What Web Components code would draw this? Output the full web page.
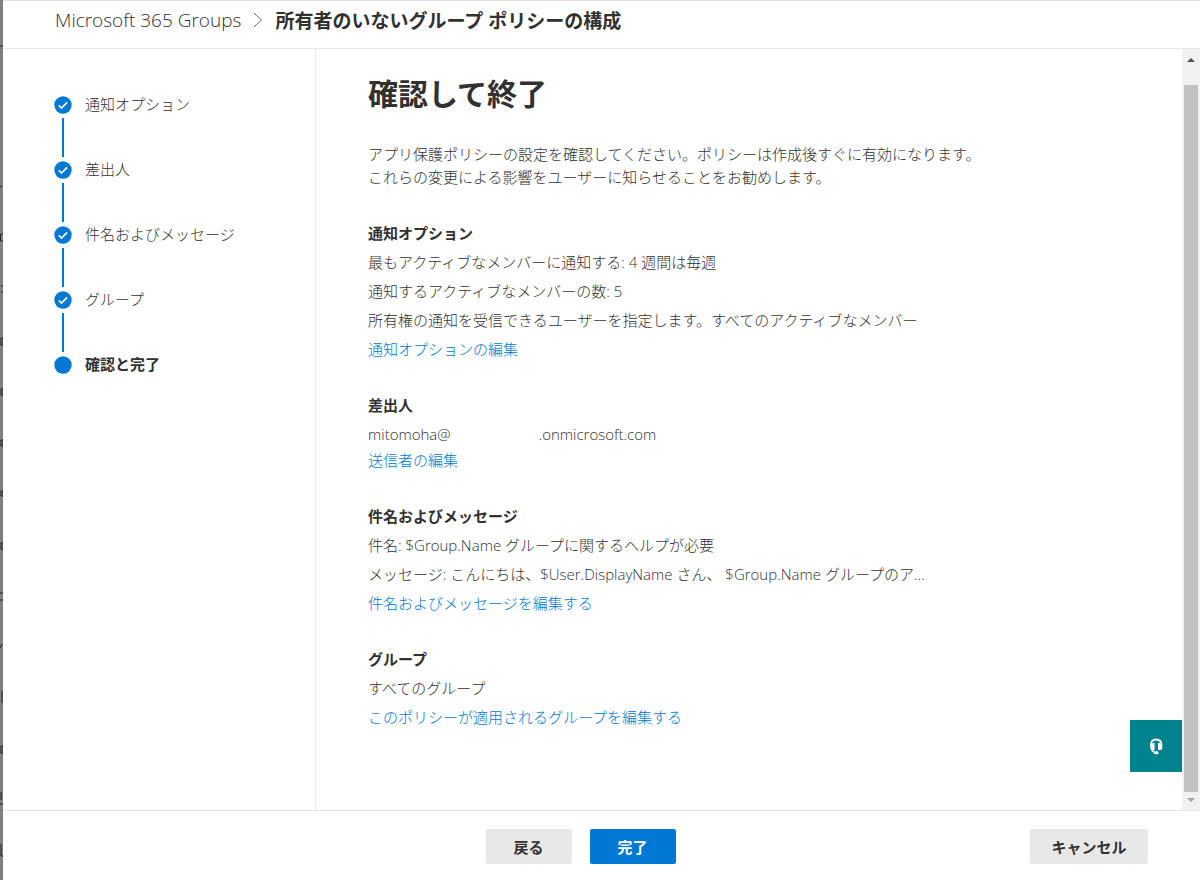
<!DOCTYPE html>
<html lang="ja">
<head>
<meta charset="utf-8">
<meta name="viewport" content="width=device-width, initial-scale=1">
<title>所有者のいないグループ ポリシーの構成</title>
<style>
  body {
    margin: 0;
    font-family: "Open Sans", "Noto Sans CJK JP", sans-serif;
    font-size: 15px;
    font-weight: 300;
    color: #323130;
    background: #fff;
  }
</style>
</head>
<body>
<policy-wizard>
  <wizard-header slot="header" parent="Microsoft 365 Groups" current="所有者のいないグループ ポリシーの構成"></wizard-header>
  <step-list slot="steps">
    <step-item state="done">通知オプション</step-item>
    <step-item state="done">差出人</step-item>
    <step-item state="done">件名およびメッセージ</step-item>
    <step-item state="done">グループ</step-item>
    <step-item state="current">確認と完了</step-item>
  </step-list>
  <review-page heading="確認して終了">
    <p slot="intro">アプリ保護ポリシーの設定を確認してください。ポリシーは作成後すぐに有効になります。<br>これらの変更による影響をユーザーに知らせることをお勧めします。</p>
    <review-section heading="通知オプション" edit="通知オプションの編集">
      <review-line>最もアクティブなメンバーに通知する: 4 週間は毎週</review-line>
      <review-line>通知するアクティブなメンバーの数: 5</review-line>
      <review-line>所有権の通知を受信できるユーザーを指定します。すべてのアクティブなメンバー</review-line>
    </review-section>
    <review-section heading="差出人" edit="送信者の編集">
      <review-line compact><span>mitomoha@</span><span>.onmicrosoft.com</span></review-line>
    </review-section>
    <review-section heading="件名およびメッセージ" edit="件名およびメッセージを編集する">
      <review-line>件名: $Group.Name グループに関するヘルプが必要</review-line>
      <review-line>メッセージ: こんにちは、$User.DisplayName さん、 $Group.Name グループのア...</review-line>
    </review-section>
    <review-section heading="グループ" edit="このポリシーが適用されるグループを編集する">
      <review-line>すべてのグループ</review-line>
    </review-section>
  </review-page>
  <help-button slot="help"></help-button>
  <scroll-track slot="scroll"></scroll-track>
  <wizard-footer slot="footer"></wizard-footer>
</policy-wizard>

<script>
// Page frame: dimmed page edge, header, steps, content, footer
class PolicyWizard extends HTMLElement {
  constructor() {
    super();
    this.attachShadow({ mode: 'open' });
    this.shadowRoot.innerHTML = `
      <style>
        :host {
          display: grid;
          grid-template-columns: 3px minmax(0, 1fr);
          min-height: 100vh;
        }
        .edge {
          background: #7f7f7f;
          overflow: hidden;
        }
        .edge svg {
          display: block;
        }
        .panel {
          display: flex;
          flex-direction: column;
          border-top: 1px solid #e1e1e1;
        }
        .body {
          flex: 1;
          display: grid;
          grid-template-columns: 313px minmax(0, 1fr) 18px;
        }
        nav {
          border-right: 1px solid #e8e8e8;
        }
        main {
          position: relative;
        }
        .help {
          position: absolute;
          right: 0;
          bottom: 38px;
        }
        .scroll {
          display: grid;
        }
      </style>
      <div class="edge">
        <svg width="3" height="880" viewBox="0 0 3 880" aria-hidden="true">
          <path d="M0 46h3M0 187l2-1M1 234h2M1 241h2M0.500 234v7M1 286h2M1 292h2M1 338h2v7h-2zM1 389h2v6h-2zM1 440h2v6h-2zM1 491h2v5h-2zM1 543h2v6h-2zM0 593h3M0 600h3M0 648l2-4M2 691v12M1 746h2v7h-2zM1 792v8M0 804h3M1 844v12h2" fill="none" stroke="#222"/>
        </svg>
      </div>
      <div class="panel">
        <slot name="header"></slot>
        <div class="body">
          <nav><slot name="steps"></slot></nav>
          <main>
            <slot></slot>
            <div class="help"><slot name="help"></slot></div>
          </main>
          <div class="scroll"><slot name="scroll"></slot></div>
        </div>
        <slot name="footer"></slot>
      </div>
    `;
  }
}

customElements.define('policy-wizard', PolicyWizard);

class WizardHeader extends HTMLElement {
  constructor() {
    super();
    this.attachShadow({ mode: 'open' });
    this.shadowRoot.innerHTML = `
      <style>
        :host {
          display: block;
          border-bottom: 1px solid #e8e8e8;
        }
        header {
          display: flex;
          align-items: center;
          height: 37px;
          padding: 0 52px 10px;
          gap: 12px;
          font-size: 19px;
        }
        a {
          color: #323130;
          text-decoration: none;
        }
        h2 {
          margin: 0;
          font-size: 19px;
          font-weight: 700;
        }
        svg {
          flex: none;
        }
      </style>
      <header>
        <a href="#groups"></a>
        <svg width="10" height="16" viewBox="0 0 10 16" aria-hidden="true">
          <path d="M1 1l7.500 7L1 15" fill="none" stroke="#666"/>
        </svg>
        <h2></h2>
      </header>
    `;
  }

  connectedCallback() {
    this.shadowRoot.querySelector('a').textContent = this.getAttribute('parent');
    this.shadowRoot.querySelector('h2').textContent = this.getAttribute('current');
  }
}

customElements.define('wizard-header', WizardHeader);

class StepList extends HTMLElement {
  constructor() {
    super();
    this.attachShadow({ mode: 'open' });
    this.shadowRoot.innerHTML = `
      <style>
        :host {
          display: flex;
          flex-direction: column;
          padding: 44px 20px 20px 51px;
        }
      </style>
      <slot></slot>
    `;
  }
}

customElements.define('step-list', StepList);

class StepItem extends HTMLElement {
  constructor() {
    super();
    this.attachShadow({ mode: 'open' });
    this.shadowRoot.innerHTML = `
      <style>
        :host {
          display: grid;
          grid-template-columns: 18px 1fr;
          column-gap: 13px;
          height: 65px;
        }
        .marker {
          display: flex;
          flex-direction: column;
          align-items: center;
          gap: 4px;
          padding-top: 3px;
        }
        .marker svg {
          flex: none;
        }
        .line {
          width: 2px;
          height: 39px;
          background: #0078d4;
        }
        .label {
          line-height: 22px;
        }
        :host([state="current"]) .line,
        :host([state="current"]) .check {
          display: none;
        }
        :host([state="current"]) .label {
          font-weight: 700;
        }
      </style>
      <div class="marker">
        <svg width="18" height="18" viewBox="0 0 18 18" aria-hidden="true">
          <circle cx="9" cy="9" r="8.700" fill="#0078d4"/>
          <path class="check" d="M4.800 9.400l2.700 2.700 5.600-5.700" fill="none" stroke="#fff" stroke-width="1.600"/>
        </svg>
        <div class="line"></div>
      </div>
      <div class="label"><slot></slot></div>
    `;
  }
}

customElements.define('step-item', StepItem);

class ReviewPage extends HTMLElement {
  constructor() {
    super();
    this.attachShadow({ mode: 'open' });
    this.shadowRoot.innerHTML = `
      <style>
        :host {
          display: block;
          padding: 23px 52px 40px;
        }
        h1 {
          margin: 0 0 27px;
          font-size: 30px;
          line-height: 44px;
        }
        ::slotted(p) {
          margin: 0;
          line-height: 23px;
        }
        .sections {
          display: flex;
          flex-direction: column;
          gap: 27px;
          margin-top: 30px;
        }
      </style>
      <h1></h1>
      <slot name="intro"></slot>
      <div class="sections"><slot></slot></div>
    `;
  }

  connectedCallback() {
    this.shadowRoot.querySelector('h1').textContent = this.getAttribute('heading');
  }
}

customElements.define('review-page', ReviewPage);

class ReviewSection extends HTMLElement {
  constructor() {
    super();
    this.attachShadow({ mode: 'open' });
    this.shadowRoot.innerHTML = `
      <style>
        :host {
          display: block;
          line-height: 29px;
        }
        h3 {
          margin: 0;
          font-size: 15px;
          font-weight: 700;
        }
        a {
          display: table;
          color: #0078d4;
          text-decoration: none;
        }
        a:hover {
          text-decoration: underline;
        }
      </style>
      <h3></h3>
      <slot></slot>
      <a href="#edit"></a>
    `;
  }

  connectedCallback() {
    this.shadowRoot.querySelector('h3').textContent = this.getAttribute('heading');
    this.shadowRoot.querySelector('a').textContent = this.getAttribute('edit');
  }
}

customElements.define('review-section', ReviewSection);

class ReviewLine extends HTMLElement {
  constructor() {
    super();
    this.attachShadow({ mode: 'open' });
    this.shadowRoot.innerHTML = `
      <style>
        :host {
          display: block;
        }
        :host([compact]) {
          display: flex;
          gap: 88px;
          height: 26px;
        }
      </style>
      <slot></slot>
    `;
  }
}

customElements.define('review-line', ReviewLine);

class HelpButton extends HTMLElement {
  constructor() {
    super();
    this.attachShadow({ mode: 'open' });
    this.shadowRoot.innerHTML = `
      <style>
        :host {
          display: block;
        }
        button {
          display: grid;
          place-items: center;
          width: 52px;
          height: 52px;
          padding: 0;
          border: 0;
          background: #00838c;
          cursor: pointer;
        }
      </style>
      <button type="button" aria-label="ヘルプ">
        <svg width="14" height="18" viewBox="0 0 14 18" fill="none" stroke="#fff" aria-hidden="true">
          <path d="M2 8C2 4 3.500 2.500 7 2.500S12.500 4 12.500 8" stroke-width="1.800"/>
          <path d="M1 7.500h1.500L4 6h1.500v7.500H4L1.500 12zM13.300 7.500h-1.500L10.500 6H9v7h3l1.300-1.500z" fill="#fff" stroke="none"/>
          <path d="M2.300 12.500c1 1.800 2 2.700 3.500 3" stroke-width="1.500"/>
          <path d="M6.500 15.700h1.600" stroke-width="3" stroke-linecap="round"/>
        </svg>
      </button>
    `;
  }
}

customElements.define('help-button', HelpButton);

class ScrollTrack extends HTMLElement {
  constructor() {
    super();
    this.attachShadow({ mode: 'open' });
    this.shadowRoot.innerHTML = `
      <style>
        :host {
          display: flex;
          flex-direction: column;
          align-items: center;
          background: #f1f1f1;
        }
        svg {
          flex: none;
        }
        .thumb {
          flex: 1;
          width: 14px;
          background: #c1c1c1;
        }
      </style>
      <svg width="18" height="36" viewBox="0 0 18 36" aria-hidden="true"><path d="M5 13l4-4 4 4z" fill="#505050"/></svg>
      <div class="thumb"></div>
      <svg width="18" height="18" viewBox="0 0 18 18" aria-hidden="true"><path d="M5 6l4 4 4-4z" fill="#a3a3a3"/></svg>
    `;
  }
}

customElements.define('scroll-track', ScrollTrack);

class WizardFooter extends HTMLElement {
  constructor() {
    super();
    this.attachShadow({ mode: 'open' });
    this.shadowRoot.innerHTML = `
      <style>
        :host {
          display: block;
          border-top: 1px solid #e8e8e8;
        }
        footer {
          display: grid;
          grid-template-columns: 1fr auto 1fr;
          align-items: center;
          padding: 18px 52px 16px;
        }
        .main {
          grid-column: 2;
          display: flex;
          gap: 18px;
          margin-right: 42px;
        }
        button {
          min-width: 86px;
          height: 35px;
          padding: 0 20px;
          border: 0;
          border-radius: 2px;
          background: #e8e8e8;
          color: #323130;
          font: inherit;
          font-weight: 700;
          cursor: pointer;
        }
        .primary {
          background: #0078d4;
          color: #fff;
        }
        .cancel {
          justify-self: end;
          min-width: 118px;
        }
      </style>
      <footer>
        <div class="main">
          <button type="button">戻る</button>
          <button type="button" class="primary">完了</button>
        </div>
        <button type="button" class="cancel">キャンセル</button>
      </footer>
    `;
  }
}

customElements.define('wizard-footer', WizardFooter);
</script>
</body>
</html>
